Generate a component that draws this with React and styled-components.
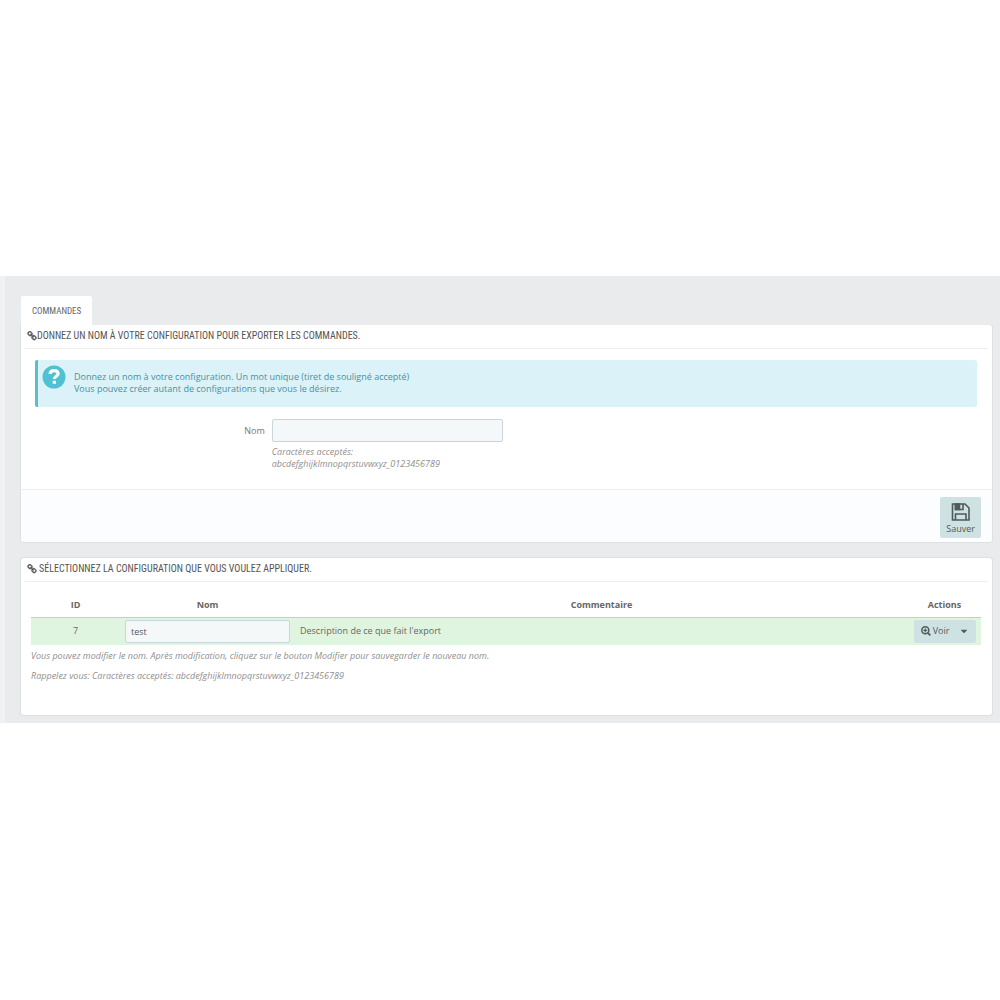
import React, { useState } from 'react';
import styled, { createGlobalStyle } from 'styled-components';
import { FaCaretDown } from 'react-icons/fa';


const GlobalStyle = createGlobalStyle`
  * {
    box-sizing: border-box;
  }

  body {
    margin: 0;
    background: #fff;
    color: #666;
    font-family: 'Open Sans', sans-serif;
    font-size: 9px;
    line-height: 12px;
  }

  button,
  input {
    font: inherit;
    color: inherit;
  }
`;

const Page = styled.div`
  display: flex;
  flex-direction: column;
  justify-content: center;
  min-height: 100vh;
  padding-bottom: 1px;
`;

const Content = styled.main`
  padding: 20px 8px 8px 16px;
  border-left: 5px solid #f0f1f3;
  background: #eaebed;
`;

const TabList = styled.div`
  display: flex;
`;

const Tab = styled.button`
  height: 29px;
  padding: 0 11px;
  border: 0;
  border-radius: 2px 2px 0 0;
  background: #fff;
  font-family: 'Ubuntu Condensed', 'Roboto Condensed', sans-serif;
  font-size: 9px;
  text-transform: uppercase;
  cursor: pointer;
`;

const Panel = styled.section`
  border-radius: ${(props) => (props.$tabbed ? '0 3px 3px 3px' : '3px')};
  background: #fff;
  box-shadow: 0 0 1px 1px #dddfe2;
  clip-path: ${(props) => (props.$tabbed ? 'inset(0 -2px -2px -2px)' : 'none')};

  & + & {
    margin-top: 16px;
  }
`;

const PanelTitle = styled.h2`
  display: flex;
  align-items: center;
  gap: ${(props) => props.$gap || '0'};
  height: 24px;
  margin: 0 4px;
  padding: 0 2px 1px;
  border-bottom: 1px solid #eee;
  color: #555;
  font-family: 'Ubuntu Condensed', 'Roboto Condensed', sans-serif;
  font-size: 10px;
  font-weight: normal;
  text-transform: uppercase;
`;

const Alert = styled.div`
  display: flex;
  gap: 8px;
  margin: 11px 15px 12px 14px;
  min-height: 47px;
  padding: 5px 4px;
  border-left: 3px solid #5fbccb;
  border-radius: 2px;
  background: #dcf2f9;
  color: #4492a0;

  p {
    margin: 0;
    padding-top: 6px;
  }
`;

const FormRow = styled.div`
  display: grid;
  grid-template-columns: 25% 24%;
  column-gap: 7px;
  padding: 0 5px 19px 3px;
`;

const FieldLabel = styled.label`
  padding-top: 6px;
  color: #777;
  text-align: right;
`;

const TextInput = styled.input`
  display: block;
  width: 100%;
  height: 23px;
  padding: 0 5px;
  border: 1px solid #c7d6db;
  border-radius: 2px;
  background: #f5f8f9;
  color: #555;
`;

const Help = styled.p`
  margin: ${(props) => props.$margin || '4px 0 0'};
  color: #8f8f8f;
  font-style: italic;
`;

const PanelFooter = styled.div`
  display: flex;
  justify-content: flex-end;
  height: 53px;
  padding: 7px 11px 0;
  border-top: 1px solid #eee;
  border-radius: 0 0 3px 3px;
  background: #fcfdfe;
`;

const SaveButton = styled.button`
  display: flex;
  flex-direction: column;
  align-items: center;
  gap: 1px;
  height: 41px;
  padding: 5px 6px 0;
  border: 0;
  border-radius: 2px;
  background: #cfe2e3;
  color: #4f5a5b;
  cursor: pointer;
`;

const TableBody = styled.div`
  padding: 11px 11px 33px 10px;
`;

const Table = styled.table`
  width: 100%;
  border-collapse: collapse;
  table-layout: fixed;

  th {
    height: 24px;
    padding: 0;
    border-bottom: 1px solid #b5d5d0;
    color: #666;
  }

  td {
    height: 28px;
    padding: 0 5px;
    background: #e0f5e0;
  }
`;

const Column = styled.col`
  width: ${(props) => props.$width || 'auto'};
`;

const IdCell = styled.td`
  text-align: center;
`;

const ButtonGroup = styled.div`
  display: flex;
  margin-left: 1px;
  border-radius: 2px;
  background: #cfe2e3;
`;

const ActionButton = styled.button`
  display: flex;
  align-items: center;
  justify-content: center;
  flex: ${(props) => (props.$toggle ? '0 0 24px' : '1')};
  gap: 2px;
  height: 23px;
  padding: ${(props) => (props.$toggle ? '0' : '0 0 0 4px')};
  border: 0;
  background: transparent;
  color: #4f5a5b;
  cursor: pointer;
`;

const LinkIcon = () => (
  <svg width="10" height="10" viewBox="0 0 1792 1792" fill="currentColor" stroke="currentColor" strokeWidth="60" aria-hidden="true">
    <path d="M1520 1216q0-40-28-68l-208-208q-28-28-68-28-42 0-72 32 3 3 19 18.500t21.500 21.500 15 19 13 25.500 3.500 27.500q0 40-28 68t-68 28q-15 0-27.500-3.500t-25.500-13-19-15-21.500-21.500-18.500-19q-33 31-33 73 0 40 28 68l206 207q27 27 68 27 40 0 68-26l147-146q28-28 28-67zm-703-705q0-40-28-68l-206-207q-28-28-68-28-39 0-68 27l-147 146q-28 28-28 67 0 40 28 68l208 208q27 27 68 27 42 0 72-31-3-3-19-18.500t-21.500-21.500-15-19-13-25.500-3.500-27.500q0-40 28-68t68-28q15 0 27.500 3.500t25.500 13 19 15 21.500 21.500 18.500 19q33-31 33-73zm895 705q0 120-85 203l-147 146q-83 83-203 83-121 0-204-85l-206-207q-83-83-83-203 0-123 88-209l-88-88q-86 88-208 88-120 0-204-84l-208-208q-84-84-84-204t85-203l147-146q83-83 203-83 121 0 204 85l206 207q83 83 83 203 0 123-88 209l88 88q86-88 208-88 120 0 204 84l208 208q84 84 84 204z" />
  </svg>
);

const QuestionIcon = () => (
  <svg width="24" height="24" viewBox="0 0 24 24" fill="none" aria-hidden="true">
    <circle cx="12" cy="12" r="11.5" fill="#4fc1d3" />
    <path d="M7.900 8.900c.5-2.300 2-3.200 4.200-3.200 2.300 0 4 1.200 4 3.100 0 2.400-3.700 2.600-3.700 5.100" stroke="#fff" strokeWidth="3.200" />
    <path d="M10.700 15.700h3.300v3h-3.300z" fill="#fff" />
  </svg>
);

const SaveIcon = () => (
  <svg width="20" height="20" viewBox="0 0 20 20" fill="none" stroke="currentColor" strokeWidth="1.600" aria-hidden="true">
    <path d="M1.500 2h12.500l4 4v12H1.500z" />
    <path d="M4.500 18v-6h10.500v6" />
    <path d="M4.500 2v5.500h7.500V2" />
    <path d="M4.500 2h4v5.500h-4z" fill="currentColor" />
  </svg>
);

const ZoomIcon = () => (
  <svg width="10" height="10" viewBox="0 0 10 10" fill="none" stroke="currentColor" aria-hidden="true">
    <circle cx="4.300" cy="4.300" r="3.500" strokeWidth="1.500" />
    <path d="M2.400 4.300h3.800M4.300 2.400v3.800" strokeWidth="1.200" />
    <path d="M6.900 6.900l2.400 2.400" strokeWidth="1.900" />
  </svg>
);

const App = () => {
  const [name, setName] = useState('');
  const [configName, setConfigName] = useState('test');

  return (
    <>
      <GlobalStyle />
      <Page>
        <Content>
          <TabList>
            <Tab type="button">Commandes</Tab>
          </TabList>

          <Panel $tabbed>
            <PanelTitle>
              <LinkIcon />
              Donnez un nom à votre configuration pour exporter les commandes.
            </PanelTitle>
            <Alert>
              <QuestionIcon />
              <p>
                Donnez un nom à votre configuration. Un mot unique (tiret de souligné accepté)
                <br />
                Vous pouvez créer autant de configurations que vous le désirez.
              </p>
            </Alert>
            <FormRow>
              <FieldLabel htmlFor="name">Nom</FieldLabel>
              <div>
                <TextInput
                  type="text"
                  id="name"
                  value={name}
                  onChange={(e) => setName(e.target.value)}
                />
                <Help>
                  Caractères acceptés:
                  <br />
                  abcdefghijklmnopqrstuvwxyz_0123456789
                </Help>
              </div>
            </FormRow>
            <PanelFooter>
              <SaveButton type="button">
                <SaveIcon />
                Sauver
              </SaveButton>
            </PanelFooter>
          </Panel>

          <Panel>
            <PanelTitle $gap="2px">
              <LinkIcon />
              Sélectionnez la configuration que vous voulez appliquer.
            </PanelTitle>
            <TableBody>
              <Table>
                <colgroup>
                  <Column $width="89px" />
                  <Column $width="175px" />
                  <Column />
                  <Column $width="73px" />
                </colgroup>
                <thead>
                  <tr>
                    <th>ID</th>
                    <th>Nom</th>
                    <th>Commentaire</th>
                    <th>Actions</th>
                  </tr>
                </thead>
                <tbody>
                  <tr>
                    <IdCell>7</IdCell>
                    <td>
                      <TextInput
                        type="text"
                        aria-label="Nom"
                        value={configName}
                        onChange={(e) => setConfigName(e.target.value)}
                      />
                    </td>
                    <td>Description de ce que fait l'export</td>
                    <td>
                      <ButtonGroup>
                        <ActionButton type="button">
                          <ZoomIcon />
                          Voir
                        </ActionButton>
                        <ActionButton type="button" $toggle aria-label="Plus d'actions">
                          <FaCaretDown size={10} />
                        </ActionButton>
                      </ButtonGroup>
                    </td>
                  </tr>
                </tbody>
              </Table>
              <Help $margin="5px 0 8px">
                Vous pouvez modifier le nom. Après modification, cliquez sur le bouton Modifier pour sauvegarder le nouveau nom.
              </Help>
              <Help $margin="0">Rappelez vous: Caractères acceptés: abcdefghijklmnopqrstuvwxyz_0123456789</Help>
            </TableBody>
          </Panel>
        </Content>
      </Page>
    </>
  );
};

export default App;
